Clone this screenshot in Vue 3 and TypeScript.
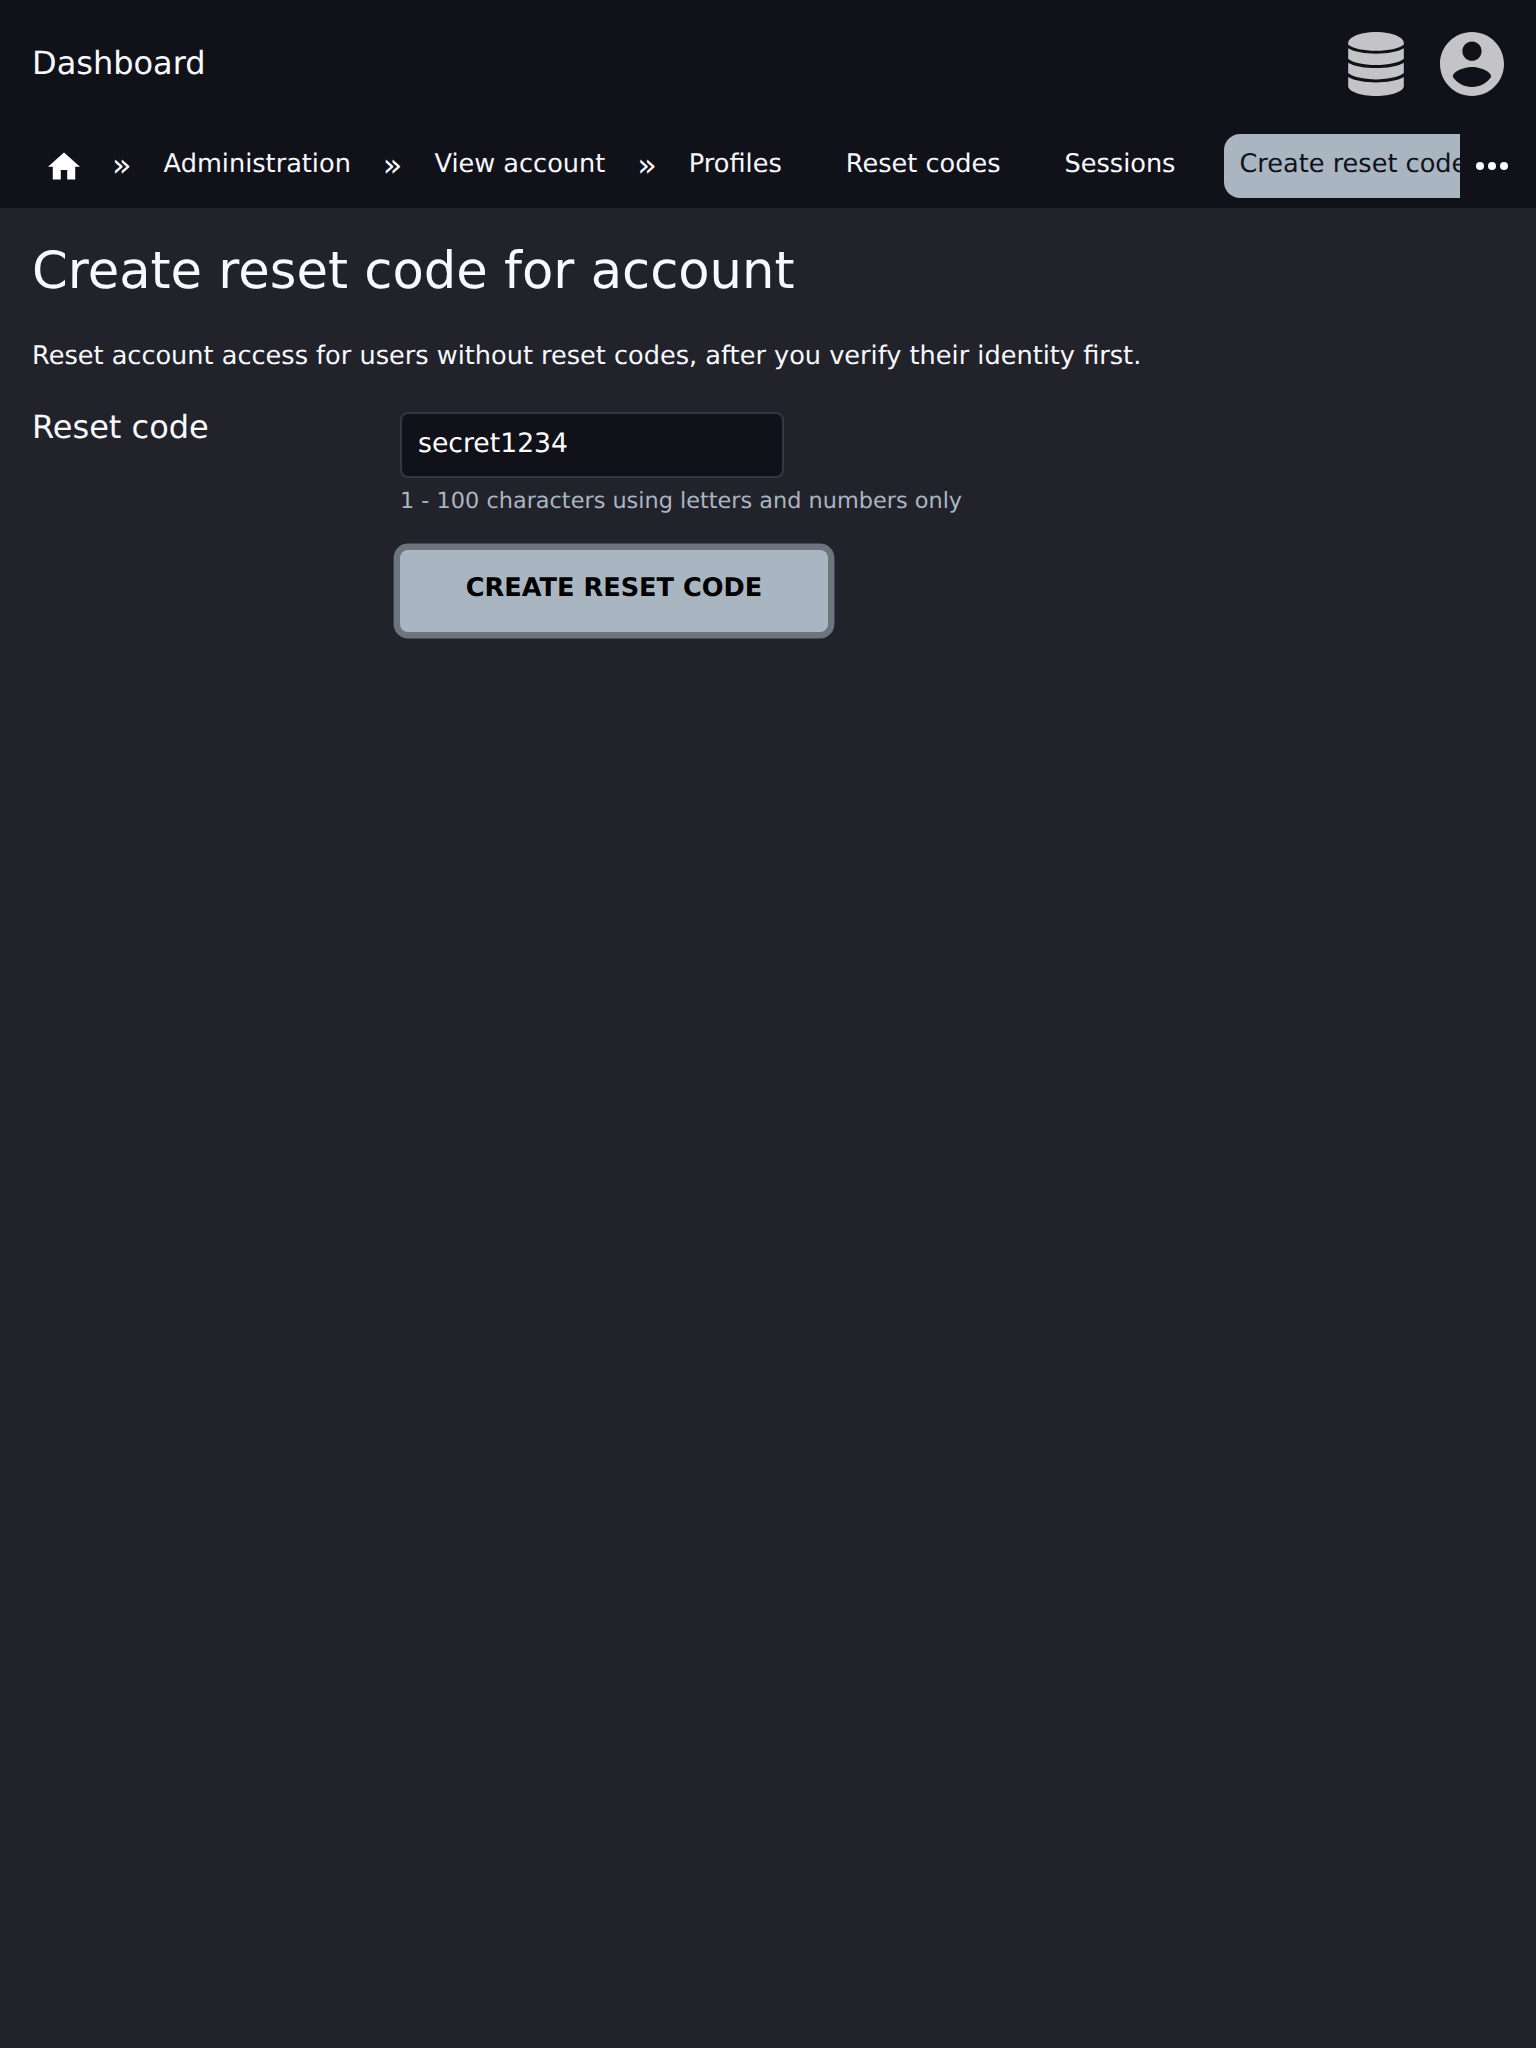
<script setup lang="ts">
import { ref } from 'vue'

interface Crumb {
  label: string
  separated: boolean
  active?: boolean
}

const crumbs: Crumb[] = [
  { label: 'Administration', separated: true },
  { label: 'View account', separated: true },
  { label: 'Profiles', separated: true },
  { label: 'Reset codes', separated: false },
  { label: 'Sessions', separated: false },
  { label: 'Create reset code', separated: false, active: true },
]

const resetCode = ref('secret1234')
</script>

<template>
  <div class="page">
    <header class="top">
      <div class="brand-row">
        <a class="brand">Dashboard</a>
        <div class="tools">
          <svg class="db" viewBox="-0.200 0 56.400 64" preserveAspectRatio="none">
            <path d="M0 11C0 5 12.500 0 28 0s28 5 28 11v1.800C51 16.500 41 18.800 28 18.800S5 16.500 0 12.800z" />
            <path d="M0 16.300C6 20 17 21.700 28 21.700s22-1.700 28-5.400v10.400C51 30.600 41 33 28 33S5 30.600 0 26.700z" />
            <path d="M0 30.700c6 3.700 17 5.400 28 5.400s22-1.700 28-5.400v10.400c-5 3.900-15 6.300-28 6.300S5 45 0 41.100z" />
            <path d="M0 45.100c6 3.700 17 5.400 28 5.400s22-1.700 28-5.400V54c0 5.500-12.500 10-28 10S0 59.500 0 54z" />
          </svg>
          <svg class="user" viewBox="2 2 20 20">
            <path d="M12 2C6.480 2 2 6.480 2 12s4.480 10 10 10 10-4.480 10-10S17.520 2 12 2zm0 3c1.660 0 3 1.340 3 3s-1.340 3-3 3-3-1.340-3-3 1.340-3 3-3zm0 14.200c-2.500 0-4.710-1.280-6-3.220.03-1.990 4-3.080 6-3.080 1.990 0 5.970 1.090 6 3.080-1.290 1.940-3.500 3.220-6 3.220z" />
          </svg>
        </div>
      </div>
      <nav class="nav">
        <div class="crumbs">
          <a class="home">
            <svg viewBox="2 1.500 20 20"><path d="M10 20v-6h4v6h5v-8h3L12 3 2 12h3v8z" /></svg>
          </a>
          <template v-for="c in crumbs" :key="c.label">
            <span v-if="c.separated" class="sep">»</span>
            <a class="crumb" :class="{ spaced: !c.separated, active: c.active }">{{ c.label }}</a>
          </template>
        </div>
        <button class="more" type="button" aria-label="More">
          <svg viewBox="0 0 32 32"><circle cx="4" cy="16" r="4" /><circle cx="16" cy="16" r="4" /><circle cx="28" cy="16" r="4" /></svg>
        </button>
      </nav>
    </header>

    <main class="content">
      <h1>Create reset code for account</h1>
      <p class="intro">Reset account access for users without reset codes, after you verify their identity first.</p>
      <form class="form" @submit.prevent>
        <label for="reset-code">Reset code</label>
        <div class="field">
          <input id="reset-code" v-model="resetCode" type="text" />
          <small>1 - 100 characters using letters and numbers only</small>
          <button class="submit" type="submit">CREATE RESET CODE</button>
        </div>
      </form>
    </main>
  </div>
</template>

<style>
body {
  margin: 0;
  background: #22222b;
}
</style>

<style scoped>
* {
  box-sizing: border-box;
}
.page {
  min-height: 2048px;
  background: #22222b;
  color: #f8f9fd;
  font-family: 'DejaVu Sans', sans-serif;
  font-size: 25.600px;
  text-rendering: geometricPrecision;
}
.top {
  height: 208px;
  background: #11111a;
}
.brand-row {
  display: flex;
  justify-content: space-between;
  height: 134px;
  padding: 32px 32px 0;
}
.brand {
  font-size: 32px;
  line-height: 62px;
}
.tools {
  display: flex;
  gap: 36px;
  height: 64px;
  fill: #c4c4c7;
}
.db {
  width: 56px;
  height: 64px;
}
.user {
  width: 64px;
  height: 64px;
}
.nav {
  display: flex;
  height: 64px;
  padding-left: 32px;
}
.crumbs {
  display: flex;
  flex: 1;
  min-width: 0;
  overflow: hidden;
  white-space: nowrap;
}
.home {
  flex: none;
  width: 64px;
  padding: 16px;
}
.home svg,
.more svg {
  display: block;
  width: 32px;
  height: 32px;
  fill: #fff;
}
.sep {
  flex: none;
  padding: 0 16px;
  font-size: 32px;
  line-height: 62px;
}
.crumb {
  flex: none;
  height: 64px;
  padding: 0 16px;
  border-radius: 16px;
  line-height: 60px;
}
.crumb.spaced {
  margin-left: 32px;
}
.crumb.active {
  margin-left: 32.500px;
  padding-left: 15.500px;
  background: #a9b5c1;
  color: #11111a;
}
.more {
  flex: none;
  width: 76px;
  padding: 0 0 0 16px;
  border: 0;
  background: none;
}
.content {
  padding: 32px;
}
h1 {
  margin: 0;
  font-size: 51.200px;
  font-weight: 400;
  line-height: 62px;
}
.intro {
  margin: 37px 0 0;
  line-height: 34px;
}
.form {
  display: flex;
  margin-top: 39px;
}
label {
  width: 368px;
  font-size: 32px;
  line-height: 30px;
}
.field {
  display: flex;
  flex-direction: column;
  align-items: flex-start;
}
input {
  width: 384px;
  height: 66px;
  padding: 0 16px 4px;
  border: 2px solid #333840;
  border-radius: 8px;
  background: #11111a;
  color: #fff;
  font-family: inherit;
  font-size: 26.667px;
  text-rendering: inherit;
}
small {
  margin-top: 8px;
  color: #a9b5c1;
  font-size: 22.400px;
  line-height: 30px;
}
.submit {
  width: 428px;
  height: 82px;
  margin-top: 34px;
  padding: 0 0 6px;
  border: 0;
  border-radius: 8px;
  background: #a9b5c1;
  box-shadow: 0 0 0 6.400px #6c757e;
  color: #000;
  font: 700 25.600px 'DejaVu Sans', sans-serif;
  text-rendering: inherit;
}
</style>
